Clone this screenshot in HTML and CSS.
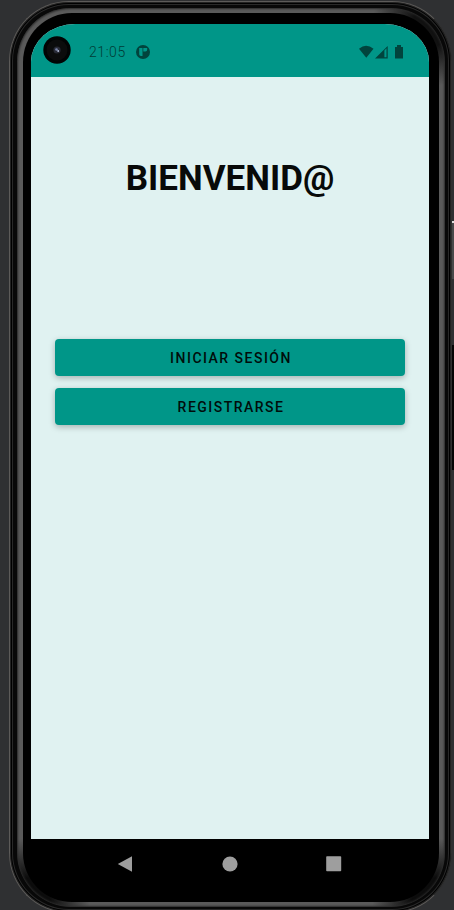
FILE: index.html
```html
<!DOCTYPE html>
<html lang="es">
<head>
<meta charset="utf-8">
<title>Bienvenid@</title>
<link rel="stylesheet" href="styles.css">
</head>
<body>
<div class="phone"><div class="rim"><div class="bezel">
  <div class="screen">
    <header class="status">
      <svg class="camera" viewBox="0 0 28 28"><circle cx="14" cy="14" r="13.7" fill="#010404"/><circle cx="14" cy="14" r="10.5" fill="#0b0c0c"/><circle cx="14" cy="14" r="3.6" fill="#292b36"/><circle cx="13.5" cy="13.5" r="1.3" fill="#7883a8"/><circle cx="15.2" cy="15" r=".9" fill="#b8c3de"/></svg>
      <span class="time">21:05</span>
      <svg class="app" viewBox="0 0 14 14"><circle cx="7" cy="7" r="7" fill="#01443d"/><path d="M3.2 3h3.3v8H5q-1.8 0-1.8-1.8zM7.3 3h3.9v1.7q0 1.8-1.8 1.8H7.3z" fill="#009688"/></svg>
      <svg class="signals" viewBox="0 0 46 14"><path d="M0 3.8Q7-2.2 14.5 3.8L7.3 12.8z"/><path d="M16 13.5 28.7 1v12.5zM25.4 5.4v6.9h2.1V3.3z" fill-rule="evenodd"/><path d="M36 2h2V0h4v2h2v11.5h-8z"/></svg>
    </header>
    <main class="content">
      <h1>BIENVENID@</h1>
      <button>INICIAR SESIÓN</button>
      <button>REGISTRARSE</button>
    </main>
  </div>
  <nav class="nav">
    <svg viewBox="0 0 16 16"><path d="M.8 8 15 .3v15.4z"/></svg>
    <svg viewBox="0 0 16 16"><circle cx="8" cy="8" r="7.6"/></svg>
    <svg viewBox="0 0 16 16"><rect x=".2" y=".3" width="15" height="15" rx=".8"/></svg>
  </nav>
</div></div></div>
<div class="power"></div>
<div class="volume"></div>
</body>
</html>
```
FILE: styles.css
```css
* { box-sizing: border-box; }
html { height: 910px; overflow: hidden; }
body {
  position: relative;
  margin: 0;
  width: 454px;
  height: 910px;
  padding: 1px 2px 0 9px;
  overflow: hidden;
  background: #2f3032;
  font-family: Roboto, sans-serif;
}
.phone {
  height: 912px;
  padding: 6px 6px 5px 7px;
  border: 1px solid #5d5b59;
  border-right-color: #303030;
  border-radius: 60px;
  background: #080808;
  box-shadow: inset 0 0 0 1px #222, inset 0 0 0 2px #000, inset 0 0 0 3px #292929;
}
.rim {
  height: 100%;
  padding: 5px 6px 5px 6px;
  border-radius: 54px;
  background:
    radial-gradient(circle at 97% 2%, #111 20px, #1110 60px),
    radial-gradient(circle at 3% 99%, #0c0c0c 20px, #0c0c0c00 60px),
    radial-gradient(circle at 97% 99%, #0c0c0c 20px, #0c0c0c00 60px),
    #5a5a5a;
  box-shadow: inset 0 0 2px 1px #2b2b2b;
}
.bezel {
  height: 100%;
  padding: 11px 10px 0 8px;
  border-radius: 49px;
  background: #000;
}
.screen {
  height: 815px;
  border-radius: 44px 44px 0 0 / 38px 38px 0 0;
  background: #e0f2f1;
  overflow: hidden;
}
.status {
  display: flex;
  align-items: center;
  height: 53px;
  padding: 2px 24px 0 12px;
  background: #009688;
}
.camera { width: 28px; height: 28px; margin-top: -4px; }
.time { margin-left: 18px; padding-top: 1px; font-size: 14px; font-weight: 300; letter-spacing: .55px; color: #013d37; }
.app { width: 14px; height: 14px; margin-left: 10px; }
.signals { width: 46px; height: 14px; margin-left: auto; fill: #01443d; }
.content { padding: 79px 24px 0; }
h1 {
  margin: 0 0 137px;
  font-size: 35px;
  line-height: 46px;
  font-weight: 700;
  text-align: center;
  color: #080a09;
}
button {
  display: block;
  width: 100%;
  height: 37px;
  margin: 0 0 12px;
  padding: 1px 0 0 2px;
  border: 0;
  border-radius: 4px;
  background: #009688;
  box-shadow: 0 2px 6px #0004;
  font: 500 14px Roboto, sans-serif;
  letter-spacing: 1.48px;
  color: #000d0b;
}
.nav {
  display: flex;
  justify-content: space-between;
  padding: 17px 87px 0 86px;
}
.nav svg { width: 16px; height: 16px; fill: #9e9e9e; }
.power, .volume { position: absolute; left: 452px; width: 2px; }
.power { top: 221px; height: 58px; background: #48494a; border-top: 2px solid #ddd; }
.volume { top: 345px; height: 125px; background: #050505; }
```
